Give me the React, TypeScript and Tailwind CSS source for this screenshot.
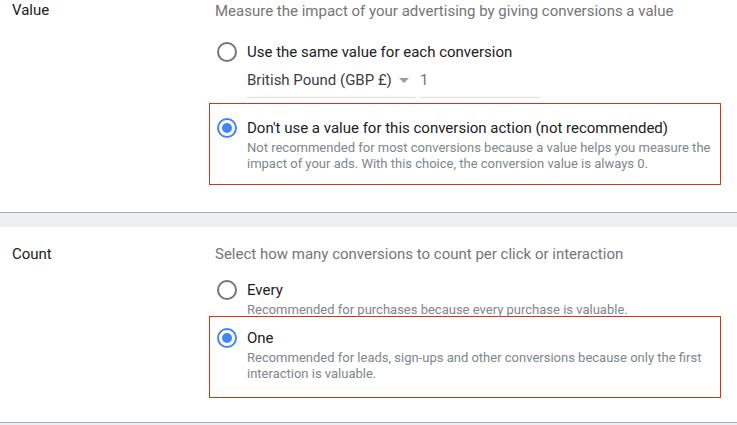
import React from "react";

function Radio({ checked = false }: { checked?: boolean }) {
  return (
    <span
      className={
        checked
          ? "flex h-5 w-5 shrink-0 items-center justify-center rounded-full border-2 border-[#4285f4]"
          : "flex h-5 w-5 shrink-0 items-center justify-center rounded-full border-2 border-[#757575]"
      }
    >
      {checked && <span className="h-[10px] w-[10px] rounded-full bg-[#4285f4]" />}
    </span>
  );
}

export default function App() {
  return (
    <div className="h-[425px] w-[737px] overflow-hidden bg-white font-['Roboto','Liberation_Sans',sans-serif] text-[15px] leading-5 text-[#212121]">
      {/* Value section */}
      <section className="flex pb-[27px]">
        <div className="w-[209px] pl-3">Value</div>
        <div className="w-[512px]">
          <p className="mt-px pl-[6px] text-[#757575]">
            Measure the impact of your advertising by giving conversions a value
          </p>
          <div className="mt-[21px] flex items-center gap-[10px] pl-2">
            <Radio />
            <span>Use the same value for each conversion</span>
          </div>
          <div className="ml-[38px] flex">
            <div className="flex w-[168px] items-center border-b border-[#dadce0] pb-[7px] pt-[8px] text-[#3c4043]">
              <span>British Pound (GBP £)</span>
              <svg className="ml-[7px]" width="10" height="5" viewBox="0 0 10 5">
                <path d="M0 0 L10 0 L5 5 Z" fill="#9e9e9e" />
              </svg>
            </div>
            <div className="ml-[5px] w-[120px] border-b border-[#dadce0] pb-[7px] pt-[8px] text-[#757575]">
              1
            </div>
          </div>
          <div className="mt-[5px] flex gap-[10px] border border-[#c9391c] pb-[12px] pl-[7px] pr-2 pt-[14px]">
            <Radio checked />
            <div className="flex-1">
              <div>Don't use a value for this conversion action (not recommended)</div>
              <p className="mt-[2px] text-[13px] leading-4 text-[#80868b]">
                Not recommended for most conversions because a value helps you measure the impact of your ads. With this choice, the conversion value is always 0.
              </p>
            </div>
          </div>
        </div>
      </section>

      <div className="h-px bg-[#aeaeae]" />
      <div className="h-[14px] bg-[#eeeff0]" />

      {/* Count section */}
      <section className="flex pb-[24px] pt-[17px]">
        <div className="w-[209px] pl-3">Count</div>
        <div className="w-[512px]">
          <p className="pl-[6px] text-[#757575]">
            Select how many conversions to count per click or interaction
          </p>
          <div className="mt-[16px] flex gap-[10px] pl-2">
            <Radio />
            <div>
              <div>Every</div>
              <p className="mt-[2px] text-[13px] leading-4 text-[#80868b]">
                Recommended for purchases because every purchase is valuable.
              </p>
            </div>
          </div>
          <div className="-mt-[2px] flex gap-[10px] border border-[#c9391c] pb-[15px] pl-[7px] pr-2 pt-[11px]">
            <Radio checked />
            <div className="flex-1">
              <div>One</div>
              <p className="mt-[2px] text-[13px] leading-4 text-[#80868b]">
                Recommended for leads, sign-ups and other conversions because only the first interaction is valuable.
              </p>
            </div>
          </div>
        </div>
      </section>

      <div className="h-px bg-[#aeaeae]" />
      <div className="h-[14px] bg-[#eeeff0]" />
    </div>
  );
}
